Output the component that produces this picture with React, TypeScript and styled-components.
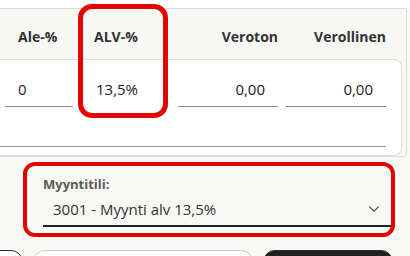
import React from 'react';
import styled, { createGlobalStyle } from 'styled-components';
import { ChevronDown } from 'lucide-react';

const GlobalStyle = createGlobalStyle`
  html, body {
    margin: 0;
    padding: 0;
    background: #f8f8f4;
    overflow: hidden;
  }
  body {
    font-family: "Open Sans", "Noto Sans", sans-serif;
    color: #333;
  }
`;

const Page = styled.div`
  width: 410px;
  height: 256px;
  overflow: hidden;
  background: #f8f8f4;
`;

const TopStrip = styled.div`
  height: 8px;
  background: #fff;
`;

const Table = styled.div`
  position: relative;
  margin: 0 3px 0 -10px;
  border-top: 1px solid #dcdcd8;
  border-right: 1px solid #dcdcd8;
  border-bottom: 1px solid #dcdcd8;
  border-bottom-right-radius: 4px;
  background: #f7f7f3;
`;

const Columns = styled.div`
  display: grid;
  grid-template-columns: 68px 89px 100px 100px;
  column-gap: 8px;
  padding-left: 15px;
`;

const HeaderRow = styled(Columns)`
  height: 50px;
  align-items: end;
  padding-bottom: 12px;
  box-sizing: border-box;
`;

const HeadCell = styled.div<{ $right?: boolean }>`
  font-size: 14px;
  font-weight: 700;
  color: #333;
  line-height: 20px;
  text-align: ${({ $right }) => ($right ? 'right' : 'left')};
  padding-left: ${({ $right }) => ($right ? '0' : '13px')};
`;

const Body = styled.div`
  padding-right: 4px;
`;

const Card = styled.div`
  background: #fff;
  border: 1px solid #dcdcd8;
  border-left: none;
  border-radius: 0 8px 8px 0;
  padding: 11px 15px 8px 0;
`;

const InputRow = styled(Columns)`
  height: 36px;
`;

const Field = styled.div<{ $right?: boolean; $plain?: boolean }>`
  display: flex;
  align-items: center;
  justify-content: ${({ $right }) => ($right ? 'flex-end' : 'flex-start')};
  padding: ${({ $right, $plain }) => ($right ? '0 13px 0 0' : $plain ? '0 0 0 15px' : '0 0 0 13px')};
  border-bottom: 1px solid ${({ $plain }) => ($plain ? 'transparent' : '#8c8c8c')};
  font-size: 15px;
  color: #222;
`;

const Description = styled.div`
  height: 36px;
  margin: 3px 0 0 0;
  border-bottom: 1px solid #9a9a9a;
`;

const Highlight = styled.div`
  position: absolute;
  left: 88px;
  top: -5px;
  width: 90px;
  height: 114px;
  box-sizing: border-box;
  border: 5px solid #e10600;
  border-radius: 14px;
  pointer-events: none;
`;

const AccountBox = styled.div`
  margin: 5px 15px 0 23px;
  border: 4px solid #e10600;
  border-radius: 12px;
  padding: 9px 0 6px 16px;
`;

const Label = styled.div`
  font-size: 13px;
  font-weight: 700;
  color: #5a5a5a;
  line-height: 18px;
`;

const Select = styled.div`
  display: flex;
  align-items: center;
  justify-content: space-between;
  height: 32px;
  padding: 0 8px 0 10px;
  border-bottom: 2px solid #222;
  font-size: 15px;
  color: #333;
`;

const Buttons = styled.div`
  display: flex;
  justify-content: flex-end;
  gap: 10px;
  margin: 13px 17px 0 0;
`;

const Button = styled.div<{ $variant: 'dark' | 'light' | 'filled'; $width: number }>`
  flex-shrink: 0;
  width: ${({ $width }) => $width}px;
  height: 40px;
  box-sizing: border-box;
  border-radius: 12px;
  border: 1px solid
    ${({ $variant }) => ($variant === 'light' ? '#c8c8c4' : '#2a2a2a')};
  background: ${({ $variant }) => ($variant === 'filled' ? '#222' : '#fff')};
`;

export default function App() {
  return (
    <Page>
      <GlobalStyle />
      <TopStrip />
      <Table>
        <HeaderRow>
          <HeadCell>Ale-%</HeadCell>
          <HeadCell>ALV-%</HeadCell>
          <HeadCell $right>Veroton</HeadCell>
          <HeadCell $right>Verollinen</HeadCell>
        </HeaderRow>
        <Body>
          <Card>
            <InputRow>
              <Field>0</Field>
              <Field $plain>13,5%</Field>
              <Field $right>0,00</Field>
              <Field $right>0,00</Field>
            </InputRow>
            <Description />
          </Card>
        </Body>
        <Highlight />
      </Table>
      <AccountBox>
        <Label>Myyntitili:</Label>
        <Select>
          <span>3001 - Myynti alv 13,5%</span>
          <ChevronDown size={18} strokeWidth={1.5} color="#555" />
        </Select>
      </AccountBox>
      <Buttons>
        <Button $variant="dark" $width={80} />
        <Button $variant="light" $width={220} />
        <Button $variant="filled" $width={130} />
      </Buttons>
    </Page>
  );
}
